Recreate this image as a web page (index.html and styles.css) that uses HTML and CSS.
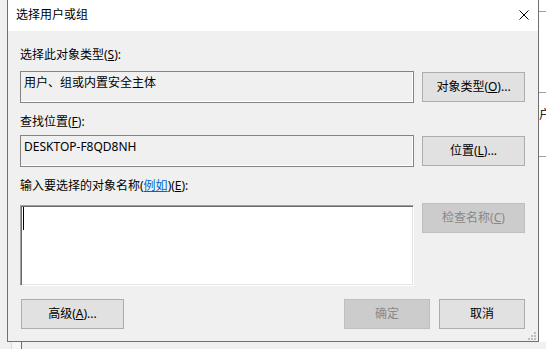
FILE: index.html
```html
<!DOCTYPE html>
<html lang="zh-CN">
<head>
    <meta charset="UTF-8">
    <title>选择用户或组</title>
    <link rel="stylesheet" href="styles.css">
</head>
<body>
    <div class="screen">
        <div class="screen-row">
            <div class="gap-left"></div>

            <!-- Dialog window -->
            <div class="dialog">
                <div class="title-bar">
                    <span class="title">选择用户或组</span>
                    <svg class="close-icon" width="10" height="10" viewBox="0 0 10 10">
                        <path d="M0.5 0.5 L9.5 9.5 M9.5 0.5 L0.5 9.5" stroke="#000" stroke-width="1" fill="none"/>
                    </svg>
                </div>

                <div class="content">
                    <div class="label label-first">选择此对象类型(<u>S</u>):</div>
                    <div class="field-row">
                        <div class="field">用户、组或内置安全主体</div>
                        <button class="btn">对象类型(<u>O</u>)...</button>
                    </div>

                    <div class="label">查找位置(<u>F</u>):</div>
                    <div class="field-row field-row-tight">
                        <div class="field">DESKTOP-F8QD8NH</div>
                        <button class="btn">位置(<u>L</u>)...</button>
                    </div>

                    <div class="label">输入要选择的对象名称(<a class="link" href="#">例如</a>)(<u>E</u>):</div>
                    <div class="field-row">
                        <div class="names-box"><span class="caret"></span></div>
                        <button class="btn btn-disabled">检查名称(<u>C</u>)</button>
                    </div>

                    <div class="footer">
                        <button class="btn btn-advanced">高级(<u>A</u>)...</button>
                        <div class="footer-right">
                            <button class="btn btn-small btn-disabled">确定</button>
                            <button class="btn btn-small">取消</button>
                        </div>
                    </div>
                </div>

                <svg class="size-grip" width="9" height="9" viewBox="0 0 9 9">
                    <rect x="7" y="1" width="2" height="2" fill="#bcbcbc"/>
                    <rect x="4" y="4" width="2" height="2" fill="#bcbcbc"/>
                    <rect x="7" y="4" width="2" height="2" fill="#bcbcbc"/>
                    <rect x="1" y="7" width="2" height="2" fill="#bcbcbc"/>
                    <rect x="4" y="7" width="2" height="2" fill="#bcbcbc"/>
                    <rect x="7" y="7" width="2" height="2" fill="#bcbcbc"/>
                </svg>
            </div>

            <!-- Window behind the dialog -->
            <div class="side">
                <div class="side-line side-line-1"></div>
                <div class="side-line side-line-2"></div>
                <div class="side-text">用户</div>
                <div class="side-line side-line-3"></div>
            </div>
        </div>

        <div class="under">
            <div class="under-line-light"></div>
            <div class="under-line-dark"></div>
        </div>
    </div>
</body>
</html>
```

FILE: styles.css
```css
* {
    margin: 0;
    padding: 0;
    box-sizing: border-box;
}

body {
    font-family: "Noto Sans", "Noto Sans CJK SC", sans-serif;
    font-size: 12px;
    color: #000;
    background: #f0f0f0;
    width: 546px;
    height: 349px;
    overflow: hidden;
}

.screen {
    display: flex;
    flex-direction: column;
    height: 349px;
}

.screen-row {
    display: flex;
    height: 342px;
}

.gap-left {
    width: 7px;
    background: #f0f0f0;
}

.dialog {
    width: 532px;
    height: 342px;
    border-left: 1px solid #707070;
    border-right: 1px solid #707070;
    border-bottom: 1px solid #707070;
    background: #f0f0f0;
    display: flex;
    flex-direction: column;
    position: relative;
}

.title-bar {
    height: 31px;
    background: #fff;
    display: flex;
    align-items: center;
    justify-content: space-between;
    padding: 0 9px 1px 8px;
}

.title {
    line-height: 16px;
}

.close-icon {
    display: block;
}

.content {
    display: flex;
    flex-direction: column;
    padding: 0 13px 0 12px;
}

.label {
    line-height: 16px;
    height: 16px;
    margin-top: 11px;
}

.label-first {
    margin-top: 16px;
}

.field-row {
    display: flex;
    gap: 8px;
    align-items: flex-start;
    margin-top: 8px;
}

.field-row-tight {
    margin-top: 5px;
}

.field {
    width: 394px;
    height: 32px;
    border: 1px solid #838383;
    box-shadow: inset -1px -1px 0 #fff;
    padding: 3px 3px 0;
    line-height: 16px;
    background: #f0f0f0;
}

.names-box {
    width: 394px;
    height: 81px;
    background: #fff;
    border-top: 1px solid #a0a0a0;
    border-left: 1px solid #a0a0a0;
    border-right: 1px solid #fff;
    border-bottom: 1px solid #fff;
    box-shadow: inset 1px 1px 0 #696969, inset -1px -1px 0 #e3e3e3;
    padding: 1px 0 0 2px;
    margin-top: 3px;
}

.caret {
    display: block;
    width: 1px;
    height: 23px;
    background: #000;
}

.link {
    color: #0066cc;
}

.btn {
    width: 103px;
    height: 30px;
    margin-top: 1px;
    background: #e1e1e1;
    border: 1px solid #adadad;
    font-family: inherit;
    font-size: 12px;
    color: #000;
    line-height: 16px;
}

.btn-disabled {
    background: #cccccc;
    border-color: #bfbfbf;
    color: #888;
}

.footer {
    display: flex;
    justify-content: space-between;
    margin-top: 13px;
}

.btn-advanced {
    margin-left: 1px;
    margin-top: 0;
}

.footer-right {
    display: flex;
    gap: 9px;
}

.btn-small {
    width: 86px;
    margin-top: 0;
}

.size-grip {
    position: absolute;
    right: 2px;
    bottom: 1px;
}

.side {
    width: 7px;
    background: #fff;
    display: flex;
    flex-direction: column;
    overflow: hidden;
}

.side-line {
    border-top: 1px solid #a0a0a0;
}

.side-line-1 {
    margin-top: 11px;
}

.side-line-2 {
    margin-top: 80px;
}

.side-text {
    margin-top: 14px;
    margin-left: -12px;
    line-height: 16px;
    white-space: nowrap;
}

.side-line-3 {
    margin-top: 33px;
}

.under {
    display: flex;
    height: 7px;
    padding-left: 11px;
}

.under-line-light {
    width: 10px;
    border-left: 1px solid #dcdcdc;
    background: #f7f7f7;
}

.under-line-dark {
    width: 1px;
    background: #6d6d6d;
}
```
